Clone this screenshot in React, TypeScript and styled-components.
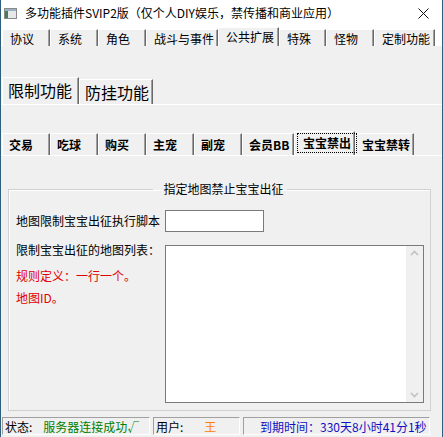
import React from 'react'
import styled, { createGlobalStyle } from 'styled-components'

const GlobalStyle = createGlobalStyle`
  html, body {
    margin: 0;
    padding: 0;
    background: #f0f0f0;
  }
  body {
    font-family: "Noto Sans CJK SC", "Noto Sans", sans-serif;
    font-size: 12px;
    color: #000;
  }
`

const Window = styled.div`
  width: 443px;
  height: 437px;
  box-sizing: border-box;
  border-left: 1px solid #2e5f7e;
  border-right: 1px solid #2e5f7e;
  background: #f0f0f0;
  display: flex;
  flex-direction: column;
  overflow: hidden;
`

const TitleBar = styled.div`
  height: 26px;
  flex: none;
  background: #fff;
  display: flex;
  align-items: center;
  padding: 0 0 0 3px;
`

const TitleText = styled.span`
  margin-left: 8px;
  font-size: 12px;
  line-height: 16px;
  white-space: nowrap;
  flex: 1;
`

const CloseButton = styled.div`
  width: 44px;
  height: 26px;
  display: flex;
  align-items: center;
  justify-content: center;
  margin-right: -3px;
`

const TabStrip = styled.div<{ $h: number; $bg?: string }>`
  height: ${p => p.$h}px;
  flex: none;
  display: flex;
  align-items: flex-end;
  padding-left: 1px;
  background: ${p => p.$bg || 'transparent'};
`

const Tab = styled.div<{ $w: number; $h: number; $active?: boolean; $size: number; $bold?: boolean; $pad: number }>`
  box-sizing: border-box;
  width: ${p => p.$w}px;
  height: ${p => (p.$active ? p.$h + 2 : p.$h)}px;
  border-top: 1px solid #fff;
  border-left: 1px solid #fff;
  border-right: 1px solid #696969;
  box-shadow: inset -1px 0 0 #a0a0a0;
  background: #f0f0f0;
  display: flex;
  align-items: center;
  padding-left: ${p => p.$pad}px;
  padding-bottom: ${p => (p.$active ? 2 : 0)}px;
  font-size: ${p => p.$size}px;
  font-weight: ${p => (p.$bold ? 700 : 400)};
  white-space: nowrap;
  position: relative;
  z-index: ${p => (p.$active ? 1 : 0)};
`

const FocusRing = styled.span`
  border: 1px dotted #000;
  padding: 1px 5px 1px 5px;
  margin-left: -6px;
  line-height: 16px;
`

const PanelEdge = styled.div<{ $gap: number }>`
  height: 0;
  border-top: 1px solid #fff;
  margin-bottom: ${p => p.$gap}px;
`

const Page = styled.div`
  flex: 1;
  display: flex;
  flex-direction: column;
  padding-top: 31px;
`

const GroupBox = styled.fieldset`
  margin: 0 0 0 7px;
  width: 423px;
  box-sizing: border-box;
  border: 1px solid #d0d0d0;
  box-shadow: inset 1px 1px 0 #fff;
  padding: 13px 6px 7px 7px;
  display: grid;
  grid-template-columns: 149px 1fr;
  grid-template-rows: 22px 158px;
  row-gap: 13px;
`

const Legend = styled.legend`
  margin: 0 auto;
  padding: 0 3px 0 10px;
  font-size: 12px;
  line-height: 16px;
`

const FieldLabel = styled.div<{ $color?: string; $top?: number }>`
  font-size: 12px;
  line-height: 12px;
  color: ${p => p.$color || '#000'};
  margin-top: ${p => p.$top || 0}px;
  white-space: nowrap;
`

const RowLabel = styled(FieldLabel)`
  align-self: center;
`

const LabelStack = styled.div`
  display: flex;
  flex-direction: column;
  margin-top: -1px;
`

const TextBox = styled.div`
  width: 99px;
  height: 22px;
  box-sizing: border-box;
  border: 1px solid #7a7a7a;
  background: #fff;
`

const ListBox = styled.div`
  width: 259px;
  height: 158px;
  box-sizing: border-box;
  border: 1px solid #7a7a7a;
  background: #fff;
  display: flex;
  justify-content: flex-end;
`

const ScrollBar = styled.div`
  width: 17px;
  background: #f0f0f0;
  display: flex;
  flex-direction: column;
  justify-content: space-between;
  align-items: center;
  padding: 4px 0;
`

const StatusBar = styled.div`
  height: 23px;
  flex: none;
  display: flex;
  gap: 3px;
  padding: 3px 0 2px 1px;
  box-sizing: border-box;
`

const StatusPane = styled.div<{ $w: number }>`
  width: ${p => p.$w}px;
  box-sizing: border-box;
  border-top: 1px solid #a0a0a0;
  border-left: 1px solid #a0a0a0;
  border-bottom: 1px solid #fff;
  border-right: 1px solid #fff;
  display: flex;
  align-items: center;
  padding-left: 2px;
  font-size: 12px;
  white-space: nowrap;
`

const StatusValue = styled.span<{ $color: string; $left: number }>`
  color: ${p => p.$color};
  margin-left: ${p => p.$left}px;
`

const mainTabs = [
  { label: '协议', w: 48 },
  { label: '系统', w: 48 },
  { label: '角色', w: 48 },
  { label: '战斗与事件', w: 72 },
  { label: '公共扩展', w: 61, active: true },
  { label: '特殊', w: 47 },
  { label: '怪物', w: 48 },
  { label: '定制功能', w: 61 },
]

const subTabs = [
  { label: '交易', w: 48 },
  { label: '吃球', w: 48 },
  { label: '购买', w: 48 },
  { label: '主宠', w: 48 },
  { label: '副宠', w: 48 },
  { label: '会员BB', w: 52 },
  { label: '宝宝禁出', w: 61, active: true },
  { label: '宝宝禁转', w: 59 },
]

const AppIcon = () => (
  <svg width="13" height="11" viewBox="0 0 13 11">
    <rect x="0.5" y="0.5" width="12" height="10" fill="#e8e8e8" stroke="#8a8a8a" />
    <rect x="1" y="1" width="11" height="2" fill="#9ab0c4" />
    <rect x="1" y="3" width="3" height="7" fill="#3f7f5a" />
  </svg>
)

const CloseIcon = () => (
  <svg width="11" height="11" viewBox="0 0 11 11">
    <path d="M0.5 0.5 L10.5 10.5 M10.5 0.5 L0.5 10.5" stroke="#111" strokeWidth="1" />
  </svg>
)

const Chevron = ({ up }: { up?: boolean }) => (
  <svg width="9" height="6" viewBox="0 0 9 6">
    <path d={up ? 'M1 5 L4.5 1.5 L8 5' : 'M1 1 L4.5 4.5 L8 1'} fill="none" stroke="#c2c2c2" strokeWidth="1.6" />
  </svg>
)

export default function App() {
  return (
    <Window>
      <GlobalStyle />
      <TitleBar>
        <AppIcon />
        <TitleText>多功能插件SVIP2版（仅个人DIY娱乐，禁传播和商业应用）</TitleText>
        <CloseButton>
          <CloseIcon />
        </CloseButton>
      </TitleBar>

      <TabStrip $h={20} $bg="#fff">
        {mainTabs.map(t => (
          <Tab key={t.label} $w={t.w} $h={17} $active={t.active} $size={12} $pad={7}>
            {t.label}
          </Tab>
        ))}
      </TabStrip>

      <Page>
        <TabStrip $h={27}>
          <Tab $w={77} $h={25} $active $size={16} $pad={5}>限制功能</Tab>
          <Tab $w={74} $h={25} $size={16} $pad={5}>防挂功能</Tab>
        </TabStrip>
        <PanelEdge $gap={26} />

        <TabStrip $h={24}>
          {subTabs.map(t => (
            <Tab key={t.label} $w={t.w} $h={22} $active={t.active} $size={12} $bold $pad={t.active ? 8 : 6}>
              {t.active ? <FocusRing>{t.label}</FocusRing> : t.label}
            </Tab>
          ))}
        </TabStrip>
        <PanelEdge $gap={25} />

        <GroupBox>
          <Legend>指定地图禁止宝宝出征</Legend>
          <RowLabel>地图限制宝宝出征执行脚本</RowLabel>
          <TextBox />
          <LabelStack>
            <FieldLabel>限制宝宝出征的地图列表：</FieldLabel>
            <FieldLabel $color="#e00000" $top={14}>规则定义：一行一个。</FieldLabel>
            <FieldLabel $color="#e00000" $top={10}>地图ID。</FieldLabel>
          </LabelStack>
          <ListBox>
            <ScrollBar>
              <Chevron up />
              <Chevron />
            </ScrollBar>
          </ListBox>
        </GroupBox>
      </Page>

      <StatusBar>
        <StatusPane $w={148}>
          状态:
          <StatusValue $color="#008000" $left={11}>服务器连接成功√</StatusValue>
        </StatusPane>
        <StatusPane $w={87}>
          用户:
          <StatusValue $color="#ff8000" $left={21}>王</StatusValue>
        </StatusPane>
        <StatusPane $w={187}>
          <StatusValue $color="#1010c0" $left={14}>到期时间：330天8小时41分1秒</StatusValue>
        </StatusPane>
      </StatusBar>
    </Window>
  )
}
